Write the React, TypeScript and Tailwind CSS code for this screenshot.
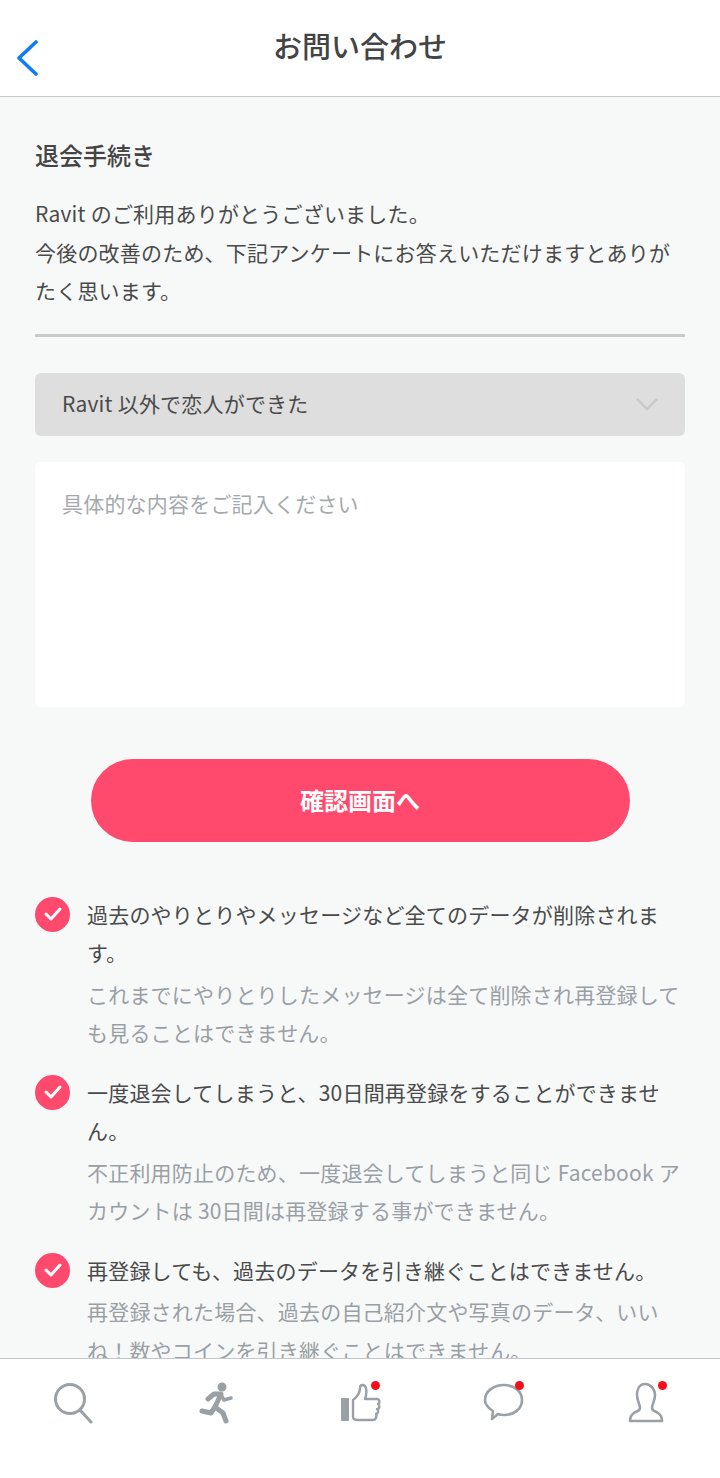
const jp = "font-['Noto_Sans_CJK_JP','Noto_Sans',sans-serif]";

function Dot() {
  return <span className="absolute left-[33px] top-[-1px] w-[9px] h-[9px] rounded-full bg-[#f70d1a]" />;
}

function Check() {
  return (
    <span className="shrink-0 w-[35px] h-[35px] rounded-full bg-[#ff4a6e] flex items-center justify-center mt-px">
      <svg width="20" height="16" viewBox="0 0 20 16" fill="none" stroke="#fff" strokeWidth="3" strokeLinecap="round" strokeLinejoin="round">
        <path d="M3 8l5 5 9-10" />
      </svg>
    </span>
  );
}

function Notice({ title, children }: { title: string; children: React.ReactNode }) {
  return (
    <div className="flex gap-[17px] mb-[22px]">
      <Check />
      <div className="flex-1 text-[21px] leading-[38.5px] tracking-[0.2px] -mt-[1px]">
        <p className="text-[#4a4a4a] mb-[3px]">{title}</p>
        <p className="text-[#9a9fa5]">{children}</p>
      </div>
    </div>
  );
}

export default function App() {
  return (
    <div className={`${jp} w-[720px] h-[1478px] flex flex-col bg-white overflow-hidden`}>
      <header className="relative h-[97px] shrink-0 border-b border-[#c4c6c7] flex items-center justify-center">
        <svg className="absolute left-[16px] top-[40px]" width="22" height="36" viewBox="0 0 22 36" fill="none" stroke="#0f7bf5" strokeWidth="3.6" strokeLinecap="round" strokeLinejoin="round">
          <path d="M20 2L3 18l17 16" />
        </svg>
        <h1 className="text-[29px] font-medium text-[#444] -mt-[4px]">お問い合わせ</h1>
      </header>

      <main className="flex-1 min-h-0 overflow-hidden bg-[#f7f9f9] px-[35px] pt-[40px]">
        <h2 className="text-[24px] leading-[36px] font-medium text-[#444]">退会手続き</h2>
        <p className="mt-[21px] text-[21px] leading-[38.5px] tracking-[0.2px] text-[#4a4a4a]">
          Ravit<span className="ml-[5px]">のご利用ありがとうございました。</span>
          <br />
          今後の改善のため、下記アンケートにお答えいただけますとありがたく思います。
        </p>
        <div className="mt-[24px] h-[3px] bg-[#c9cbcb]" />

        <div className="mt-[36px] h-[63px] rounded-[6px] bg-[#dedede] flex items-center justify-between pl-[27px] pr-[26px] text-[21px] tracking-[0.2px] text-[#4a4a4a]">
          <span>Ravit<span className="ml-[5px]">以外で恋人ができた</span></span>
          <svg width="24" height="14" viewBox="0 0 24 14" fill="none" stroke="#c8c8c8" strokeWidth="2.4">
            <path d="M2 2l10 10L22 2" />
          </svg>
        </div>

        <div className="mt-[26px] h-[245px] rounded-[6px] bg-white pl-[27px] pt-[22px] text-[21px] leading-[38.5px] tracking-[0.2px] text-[#a5a9ad]">
          具体的な内容をご記入ください
        </div>

        <div className="mt-[52px] flex justify-center">
          <button className="w-[539px] h-[83px] rounded-full bg-[#ff4a6e] text-white text-[24px] font-bold">
            確認画面へ
          </button>
        </div>

        <div className="mt-[54px]">
          <Notice title="過去のやりとりやメッセージなど全てのデータが削除されます。">
            これまでにやりとりしたメッセージは全て削除され再登録しても見ることはできません。
          </Notice>
          <Notice title="一度退会してしまうと、30日間再登録をすることができません。">
            不正利用防止のため、一度退会してしまうと同じ Facebook アカウントは 30日間は再登録する事ができません。
          </Notice>
          <Notice title="再登録しても、過去のデータを引き継ぐことはできません。">
            再登録された場合、過去の自己紹介文や写真のデータ、いいね！数やコインを引き継ぐことはできません。
          </Notice>
        </div>
      </main>

      <nav className="h-[120px] shrink-0 border-t border-[#c4c6c7] bg-white flex justify-around pt-[23px] px-[1px]">
        <span className="relative w-[44px] h-[42px]">
          <svg width="44" height="42" viewBox="0 0 44 42" fill="none" stroke="#9aa0a5" strokeWidth="3">
            <circle cx="19" cy="17" r="14.5" />
            <path d="M29 28l11 12" strokeLinecap="round" />
          </svg>
        </span>
        <span className="relative w-[44px] h-[42px]">
          <svg width="44" height="42" viewBox="0 0 44 42" fill="none" stroke="#9aa0a5" strokeWidth="5" strokeLinecap="round" strokeLinejoin="round">
            <circle cx="28" cy="5" r="4.5" fill="#9aa0a5" stroke="none" />
            <path d="M14 17l6-5h7l-6 13 8 6 3 8" />
            <path d="M21 25l-4 6-9-2" />
            <path d="M27 13l3 5 7-2" strokeWidth="3.5" />
          </svg>
        </span>
        <span className="relative w-[44px] h-[42px]">
          <svg width="44" height="42" viewBox="0 0 44 42" fill="none" stroke="#9aa0a5" strokeWidth="2.4" strokeLinejoin="round" strokeLinecap="round">
            <rect x="3" y="16" width="8" height="23" rx="1" fill="#9aa0a5" stroke="none" />
            <path d="M15 18c4-3 7-7 7-12 0-4 5-4 6 0 1 4 0 8-1 11h12c3 0 3 5 1 5 2 1 2 5-1 5 2 1 1 5-1 5 1 2 0 6-3 6H19c-2 0-4-1-4-3z" />
          </svg>
          <Dot />
        </span>
        <span className="relative w-[44px] h-[42px]">
          <svg width="44" height="42" viewBox="0 0 44 42" fill="none" stroke="#9aa0a5" strokeWidth="2.6" strokeLinejoin="round">
            <path d="M22 3c10 0 18 6 18 15s-8 15-18 15c-2 0-4 0-6-1l-6 5 1-8C6 26 3 22 3 18 3 9 12 3 22 3z" />
          </svg>
          <Dot />
        </span>
        <span className="relative w-[44px] h-[42px]">
          <svg width="44" height="42" viewBox="0 0 44 42" fill="none" stroke="#9aa0a5" strokeWidth="2.6" strokeLinejoin="round">
            <path d="M20 2c-6 0-8 6-8 11 0 6 3 9 3 13 0 3-3 3-6 5-3 2-4 5-4 8h32c0-3-1-6-4-8-3-2-6-2-6-5 0-4 3-7 3-13 0-5-4-11-10-11z" />
          </svg>
          <Dot />
        </span>
      </nav>
    </div>
  );
}
